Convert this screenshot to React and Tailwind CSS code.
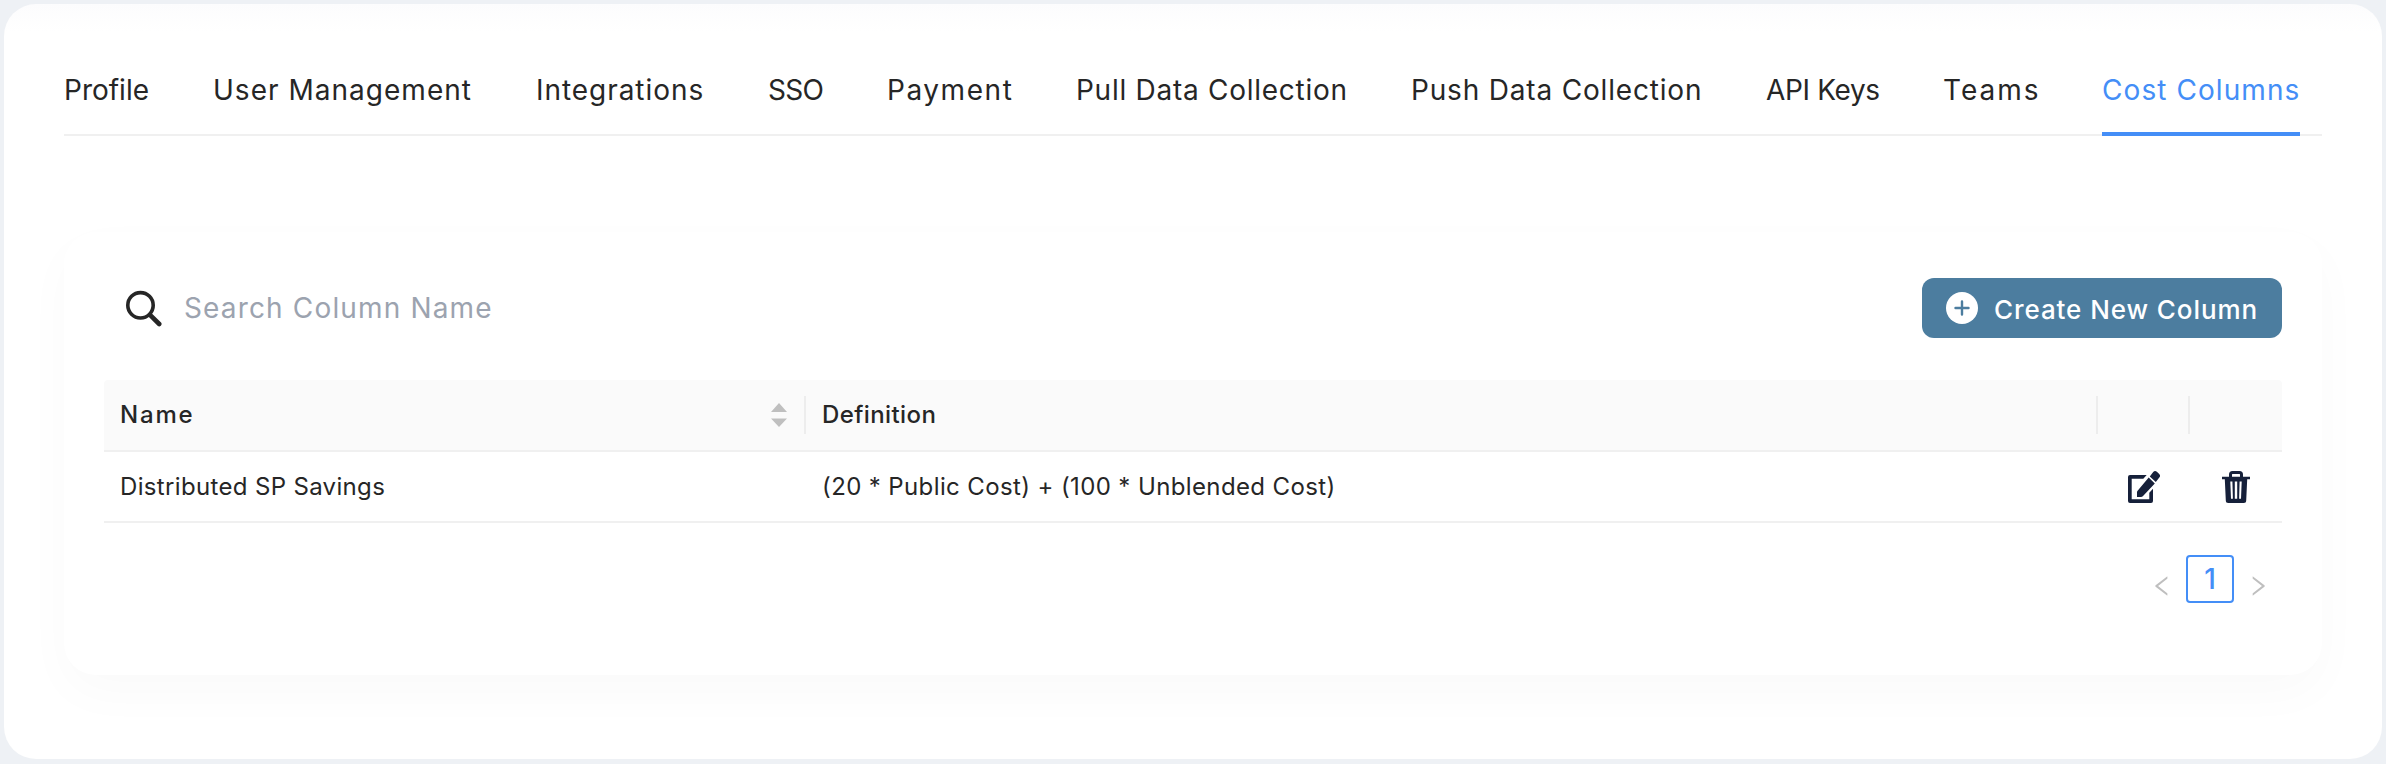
import { AiOutlineLeft, AiOutlineRight } from "react-icons/ai";

const tabs = [
  { label: "Profile", style: "w-[85px] tracking-[0px]" },
  { label: "User Management", style: "w-[259px] tracking-[1.02px]" },
  { label: "Integrations", style: "w-[168px] tracking-[0.95px]" },
  { label: "SSO", style: "w-[55px] tracking-[-0.7px]" },
  { label: "Payment", style: "w-[125px] tracking-[1.55px]" },
  { label: "Pull Data Collection", style: "w-[271px] tracking-[0.73px]" },
  { label: "Push Data Collection", style: "w-[291px] tracking-[0.82px]" },
  { label: "API Keys", style: "w-[113px] tracking-[-0.35px]" },
  { label: "Teams", style: "w-[95px] tracking-[2px]" },
];

function SearchIcon() {
  return (
    <svg className="size-[38px]" viewBox="0 0 38 38" fill="none" stroke="#262626" strokeLinecap="round">
      <circle cx="15.500" cy="16.300" r="12.700" strokeWidth="3.600" />
      <path d="M25.500 26.300l8.700 8.700" strokeWidth="4.600" />
    </svg>
  );
}

function EditIcon() {
  return (
    <svg className="size-8" viewBox="0 0 32 32" fill="#16203a">
      <path d="M2 4h16.700l-3.400 3.700H3.700v20.600h17.600v-6.500l3.700-4V30a2 2 0 0 1-2 2H2a2 2 0 0 1-2-2V6a2 2 0 0 1 2-2z" />
      <path d="M20.700 6.600l6.100 5.900-12 12.700a2.500 2.500 0 0 1-1.800.8H9v-4.800a2 2 0 0 1 .6-1.500z" />
      <path d="M21.800 5.400l3.400-4.300a2.600 2.600 0 0 1 3.700-.3l2.300 2.200a2.600 2.600 0 0 1 .1 3.500l-3.500 4.600z" />
    </svg>
  );
}

function TrashIcon() {
  return (
    <svg className="h-8 w-7" viewBox="0 0 28 32">
      <path d="M8.500 7V3.500a2 2 0 0 1 2-2h7a2 2 0 0 1 2 2V7" fill="none" stroke="#16203a" strokeWidth="3" />
      <path
        d="M0 5.800h28v2.400h-2.800L24.200 29.500a2.500 2.500 0 0 1-2.500 2.500H6.300a2.500 2.500 0 0 1-2.500-2.500L2.800 8.200H0z"
        fill="#16203a"
      />
      <path d="M8.300 10.500h2.100l.5 17.200H9zM12.800 10.500h2.400v17.200h-2.400zM17.600 10.500h2.100l-.7 17.200h-1.900z" fill="#fff" />
    </svg>
  );
}

export default function App() {
  return (
    <div className="h-[764px] w-[2386px] bg-[#eef1f5] px-1 pt-1 font-['Inter',sans-serif] text-[#262626]">
      <div className="h-[755px] rounded-[32px] bg-white bg-linear-to-b from-[#fcfcfd] to-white to-[28px] px-[60px]">
        <nav className="flex h-[132px] gap-16 border-b-2 border-[#f0f0f0] pt-[66px] text-[28px] leading-[40px]">
          {tabs.map((t) => (
            <div key={t.label} className={"shrink-0 whitespace-nowrap " + t.style}>
              {t.label}
            </div>
          ))}
          <div className="h-[66px] w-[198px] shrink-0 whitespace-nowrap border-b-4 border-[#448ef7] tracking-[1.08px] text-[#448ef7]">
            Cost Columns
          </div>
        </nav>
        <section className="mt-24 h-[443px] rounded-[32px] bg-white px-10 pt-[46px] shadow-[0_18px_50px_rgba(0,0,0,0.025)]">
          <div className="flex h-[60px] items-center justify-between">
            <div className="flex items-center pl-[21px]">
              <SearchIcon />
              <span className="ml-[21px] text-[28px] leading-[40px] tracking-[1.15px] text-[#9ca3af]">
                Search Column Name
              </span>
            </div>
            <button className="flex h-[60px] w-[360px] items-center rounded-xl bg-[#4c7d9f] pl-6 text-[26px] font-medium text-white">
              <svg className="size-8" viewBox="0 0 32 32">
                <circle cx="16" cy="16" r="16" fill="#fff" />
                <path d="M16 9.500v13M9.500 16h13" stroke="#4c7d9f" strokeWidth="2.400" strokeLinecap="round" />
              </svg>
              <span className="ml-4 whitespace-nowrap pt-0.5 tracking-[0.92px]">Create New Column</span>
            </button>
          </div>
          <div className="mt-[42px] flex h-[72px] items-center rounded-t border-b-2 border-[#f0f0f0] bg-[#fafafa] text-[24px] font-medium">
            <div className="flex h-[38px] w-[702px] items-center justify-between border-r-2 border-[#ededed] pl-4 pr-[17px]">
              <span className="tracking-[1.8px]">Name</span>
              <svg className="h-6 w-4" viewBox="0 0 15 24" fill="#bfbfbf" preserveAspectRatio="none">
                <path d="M7.500 0L15 9H0zM7.500 24L15 15.500H0z" />
              </svg>
            </div>
            <div className="flex h-[38px] w-[1292px] items-center border-r-2 border-[#ededed] pl-4">
              <span className="tracking-[0.4px]">Definition</span>
            </div>
            <div className="h-[38px] w-[92px] border-r-2 border-[#ededed]" />
          </div>
          <div className="flex h-[71px] items-center border-b-2 border-[#f0f0f0] text-[24px]">
            <div className="w-[702px] pl-4 tracking-[0.34px]">Distributed SP Savings</div>
            <div className="w-[1292px] pl-4 tracking-[0.38px]">(20 * Public Cost) + (100 * Unblended Cost)</div>
            <div className="flex w-[92px] justify-center">
              <EditIcon />
            </div>
            <div className="flex flex-1 justify-center pr-px">
              <TrashIcon />
            </div>
          </div>
          <div className="mt-8 flex h-12 justify-end pr-[11px] text-[#bfbfbf]">
            <AiOutlineLeft className="mt-[18px] size-[26px]" />
            <div className="mx-[11px] flex size-12 items-center justify-center rounded border-2 border-[#448ef7] text-[28px] font-medium text-[#448ef7]">
              1
            </div>
            <AiOutlineRight className="mt-[18px] size-[26px]" />
          </div>
        </section>
      </div>
    </div>
  );
}
